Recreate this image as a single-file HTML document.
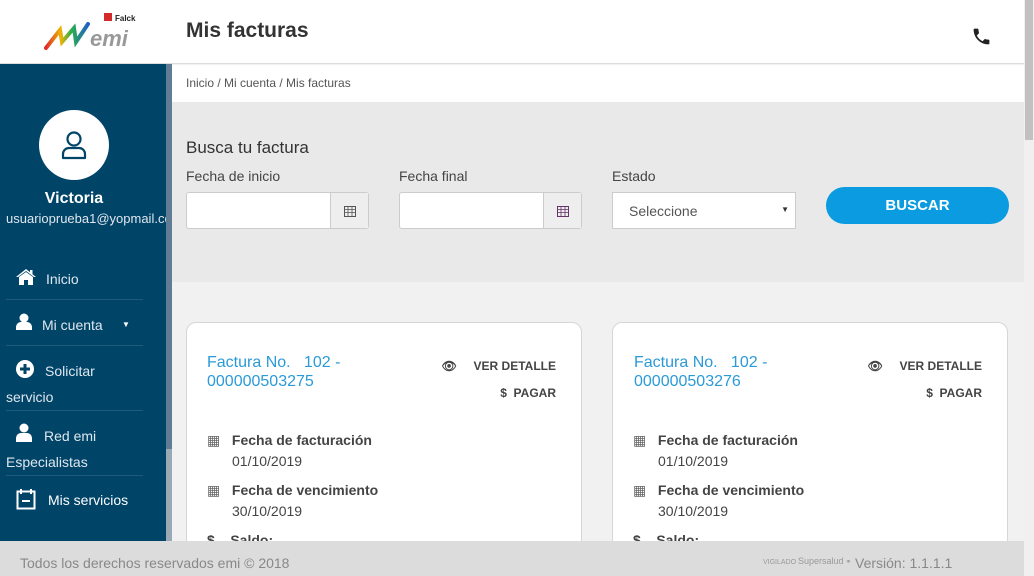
<!DOCTYPE html>
<html><head><meta charset="utf-8"><style>
*{box-sizing:border-box;margin:0;padding:0}
body{width:1034px;height:576px;overflow:hidden;font-family:"Liberation Sans",Arial,sans-serif;background:#f1f1f1;position:relative;color:#444}
.hdr{position:absolute;left:0;top:0;width:1024px;height:64px;background:#fff;border-bottom:1px solid #ddd}
.side{position:absolute;left:0;top:64px;width:166px;height:477px;background:#004468;color:#fff}
.sbar{position:absolute;left:166px;top:64px;width:6px;height:477px;background:#9aa9b4}
.sbar div{position:absolute;left:0;top:0;width:6px;height:385px;background:#607d93}
.crumb{position:absolute;left:172px;top:65px;width:852px;height:37px;background:#fff;font-size:12px;color:#555;padding:11px 14px}
.search{position:absolute;left:172px;top:102px;width:852px;height:180px;background:#e9e9e9}
.lbl{position:absolute;font-size:14px;color:#444}
.inp{position:absolute;height:37px;background:#fff;border:1px solid #ccc;border-radius:3px}
.addon{position:absolute;right:0;top:0;width:38px;height:35px;background:#eee;border-left:1px solid #ccc;display:flex;align-items:center;justify-content:center}
.card{position:absolute;top:322px;width:396px;height:240px;background:#fff;border:1px solid #d6d6d6;border-radius:10px}
.ft{position:absolute;left:0;top:541px;width:1024px;height:35px;background:#dcdcdc;color:#888;font-size:14px}
.vs{position:absolute;left:1024px;top:0;width:10px;height:576px;background:#f0f0f0}
.vs div{position:absolute;left:1px;top:0;width:8px;height:140px;background:#c1c1c1}
.nav{position:absolute;left:6px;width:137px;font-size:14px;color:#dfe7ee;border-bottom:1px solid #1f5a7a}
.t{font-size:16px;color:#2a9ad8;line-height:19px}
.act{position:absolute;right:25px;font-size:12px;font-weight:bold;color:#444;text-align:right;white-space:nowrap}
.row{position:absolute;left:20px;font-size:14px}
.row b{color:#444}
</style></head><body>
<div class="hdr">
 <svg style="position:absolute;left:42px;top:12px" width="96" height="40" viewBox="0 0 96 40">
  <defs><linearGradient id="g" x1="0" x2="1"><stop offset="0" stop-color="#e02b2b"/><stop offset=".35" stop-color="#f0b400"/><stop offset=".6" stop-color="#2ab04a"/><stop offset="1" stop-color="#2060c8"/></linearGradient></defs>
  <path d="M4 36 L18 18 L20 30 L32 16 L34 30 L46 12" fill="none" stroke="url(#g)" stroke-width="4" stroke-linecap="round"/>
  <rect x="62" y="1" width="8" height="8" fill="#d42a2a"/>
  <text x="73" y="9" font-size="8" font-weight="bold" fill="#222" font-family="Liberation Sans">Falck</text>
  <text x="48" y="34" font-size="22" font-style="italic" font-weight="bold" fill="#999" font-family="Liberation Sans">emi</text>
 </svg>
 <div style="position:absolute;left:186px;top:19px;font-size:21px;font-weight:bold;color:#333">Mis facturas</div>
 <svg style="position:absolute;left:971px;top:26px" width="21" height="21" viewBox="0 0 24 24"><path d="M6.6 10.8c1.4 2.8 3.8 5.1 6.6 6.6l2.2-2.2c.3-.3.7-.4 1-.2 1.1.4 2.3.6 3.6.6.6 0 1 .4 1 1V20c0 .6-.4 1-1 1C10.6 21 3 13.4 3 4c0-.6.4-1 1-1h3.5c.6 0 1 .4 1 1 0 1.3.2 2.5.6 3.6.1.3 0 .7-.2 1z" fill="#222"/></svg>
</div>
<div class="side">
 <div style="position:absolute;left:39px;top:46px;width:70px;height:70px;border-radius:50%;background:#fff"></div>
 <svg style="position:absolute;left:60px;top:66px" width="28" height="30" viewBox="0 0 28 30"><circle cx="14" cy="9" r="6.5" fill="none" stroke="#004468" stroke-width="2.2"/><path d="M3 28v-4a6 6 0 0 1 6-6h10a6 6 0 0 1 6 6v4z" fill="none" stroke="#004468" stroke-width="2.2" stroke-linejoin="round"/></svg>
 <div style="position:absolute;left:0;width:148px;top:126px;text-align:center;font-size:16px;font-weight:bold">Victoria</div>
 <div style="position:absolute;left:6px;top:147px;font-size:13px;color:#dfe7ee;white-space:nowrap;width:160px;overflow:hidden">usuarioprueba1@yopmail.com</div>
 <div class="nav" style="top:198px;height:38px"><svg style="position:absolute;left:10px;top:7px" width="20" height="16" viewBox="0 0 20 16"><path d="M10 0 L0 8 L2 8 L10 2 L18 8 L20 8 Z" fill="#fff"/><path d="M3 8 L10 3 L17 8 V16 H12 V11 H8 V16 H3 Z" fill="#fff"/><rect x="14" y="1" width="2.5" height="4" fill="#fff"/></svg><span style="position:absolute;left:40px;top:9px">Inicio</span></div>
 <div class="nav" style="top:236px;height:46px"><svg style="position:absolute;left:10px;top:13px" width="16" height="17" viewBox="0 0 16 17"><circle cx="8" cy="5" r="4.5" fill="#fff"/><path d="M0 17v-3a5 5 0 0 1 5-5h6a5 5 0 0 1 5 5v3z" fill="#fff"/></svg><span style="position:absolute;left:36px;top:17px">Mi cuenta</span><span style="position:absolute;left:116px;top:20px;font-size:8px;color:#fff">&#9660;</span></div>
 <div class="nav" style="top:282px;height:65px"><svg style="position:absolute;left:10px;top:14px" width="18" height="18" viewBox="0 0 18 18"><circle cx="9" cy="9" r="9" fill="#fff"/><path d="M9 4v10M4 9h10" stroke="#004468" stroke-width="3"/></svg><span style="position:absolute;left:39px;top:17px">Solicitar</span><span style="position:absolute;left:0;top:43px">servicio</span></div>
 <div class="nav" style="top:347px;height:65px"><svg style="position:absolute;left:10px;top:12px" width="16" height="19" viewBox="0 0 16 19"><circle cx="8" cy="5" r="4.5" fill="#fff"/><path d="M0 19v-4a5 5 0 0 1 5-5h6a5 5 0 0 1 5 5v4z" fill="#fff"/></svg><span style="position:absolute;left:38px;top:17px">Red emi</span><span style="position:absolute;left:0;top:43px">Especialistas</span></div>
 <svg style="position:absolute;left:16px;top:424px" width="20" height="22" viewBox="0 0 20 22"><rect x="1.5" y="3.5" width="17" height="17" fill="none" stroke="#fff" stroke-width="2"/><path d="M5 1v5M15 1v5M6 13h8" stroke="#fff" stroke-width="2"/></svg>
 <div style="position:absolute;left:48px;top:428px;font-size:14px">Mis servicios</div>
</div>
<div class="sbar"><div></div></div>
<div class="crumb">Inicio / Mi cuenta / Mis facturas</div>
<div class="search">
 <div class="lbl" style="left:14px;top:36px;font-size:17px;color:#333">Busca tu factura</div>
 <div class="lbl" style="left:14px;top:66px">Fecha de inicio</div>
 <div class="lbl" style="left:227px;top:66px">Fecha final</div>
 <div class="lbl" style="left:440px;top:66px">Estado</div>
 <div class="inp" style="left:14px;top:90px;width:183px"><div class="addon"><svg width="12" height="12" viewBox="0 0 12 12"><rect x=".5" y="1.5" width="11" height="10" fill="none" stroke="#555"/><path d="M0 4.5h12M4 1.5v10M8 1.5v10M0 7.5h12" stroke="#555" stroke-width=".8"/></svg></div></div>
 <div class="inp" style="left:227px;top:90px;width:183px"><div class="addon"><svg width="12" height="12" viewBox="0 0 12 12"><rect x=".5" y="1.5" width="11" height="10" fill="none" stroke="#636"/><path d="M0 4.5h12M4 1.5v10M8 1.5v10M0 7.5h12" stroke="#636" stroke-width=".8"/></svg></div></div>
 <div class="inp" style="left:440px;top:90px;width:184px;border-radius:0;font-size:14px;color:#555;padding:10px 16px">Seleccione<span style="position:absolute;right:6px;top:12px;font-size:8px;color:#333">&#9660;</span></div>
 <div style="position:absolute;left:654px;top:85px;width:183px;height:37px;border-radius:19px;background:#0a9be0;color:#fff;font-size:15px;font-weight:bold;text-align:center;line-height:37px">BUSCAR</div>
</div>
<div class="card" style="left:186px">
 <div class="t" style="position:absolute;left:20px;top:30px">Factura No.&nbsp;&nbsp; 102 -<br>000000503275</div>
 <div class="act" style="top:36px">&#128065;&nbsp;&nbsp;&nbsp;&nbsp;&nbsp;VER DETALLE</div>
 <div class="act" style="top:63px">$&nbsp;&nbsp;PAGAR</div>
 <div class="row" style="top:109px"><span style="color:#666">&#9638;</span>&nbsp;&nbsp; <b>Fecha de facturación</b></div>
 <div class="row" style="left:45px;top:130px">01/10/2019</div>
 <div class="row" style="top:159px"><span style="color:#666">&#9638;</span>&nbsp;&nbsp; <b>Fecha de vencimiento</b></div>
 <div class="row" style="left:45px;top:180px">30/10/2019</div>
 <div class="row" style="top:209px"><b>$&nbsp;&nbsp;&nbsp;&nbsp;Saldo:</b></div>
</div>
<div class="card" style="left:612px">
 <div class="t" style="position:absolute;left:21px;top:30px">Factura No.&nbsp;&nbsp; 102 -<br>000000503276</div>
 <div class="act" style="top:36px">&#128065;&nbsp;&nbsp;&nbsp;&nbsp;&nbsp;VER DETALLE</div>
 <div class="act" style="top:63px">$&nbsp;&nbsp;PAGAR</div>
 <div class="row" style="top:109px"><span style="color:#666">&#9638;</span>&nbsp;&nbsp; <b>Fecha de facturación</b></div>
 <div class="row" style="left:45px;top:130px">01/10/2019</div>
 <div class="row" style="top:159px"><span style="color:#666">&#9638;</span>&nbsp;&nbsp; <b>Fecha de vencimiento</b></div>
 <div class="row" style="left:45px;top:180px">30/10/2019</div>
 <div class="row" style="top:209px"><b>$&nbsp;&nbsp;&nbsp;&nbsp;Saldo:</b></div>
</div>
<div class="ft">
 <div style="position:absolute;left:20px;top:14px">Todos los derechos reservados emi © 2018</div>
 <div style="position:absolute;left:763px;top:15px;font-size:7px;color:#999">VIGILADO <span style="font-size:9px">Supersalud</span> &#9901;</div>
 <div style="position:absolute;left:855px;top:14px">Versión: 1.1.1.1</div>
</div>
<div class="vs"><div></div></div>
</body></html>
